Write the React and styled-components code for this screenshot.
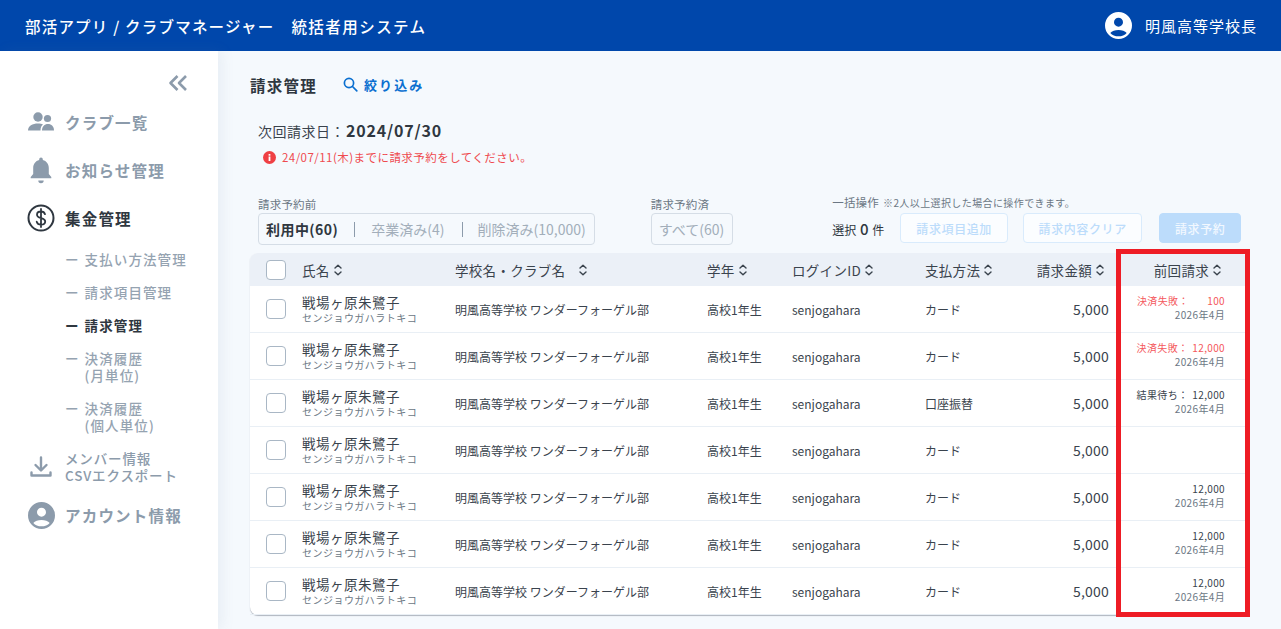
import styled, { createGlobalStyle } from 'styled-components'

const GlobalStyle = createGlobalStyle`
  html, body { margin: 0; padding: 0; height: 100%; }
  body {
    font-family: "Noto Sans CJK JP", "Noto Sans", sans-serif;
    background: #f5f9fd;
    color: #2f3740;
    overflow: hidden;
    text-spacing-trim: space-all;
  }
  * { box-sizing: border-box; }
`

const Page = styled.div`
  width: 1281px;
  height: 629px;
  display: flex;
  flex-direction: column;
  overflow: hidden;
`

const Header = styled.header`
  height: 51px;
  flex: none;
  background: #0047ab;
  color: #fff;
  display: flex;
  align-items: center;
  justify-content: space-between;
  padding: 0 24px 0 25px;
`

const AppTitle = styled.div`
  font-size: 15.5px;
  font-weight: 500;
  letter-spacing: 1.2px;
  white-space: pre;
`

const SystemName = styled.span`
  margin-left: 3px;
  letter-spacing: 1.45px;
`

const HeaderUser = styled.div`
  display: flex;
  align-items: center;
  gap: 13px;
  font-size: 15px;
  letter-spacing: 1px;
`

const Body = styled.div`
  flex: 1;
  display: flex;
  min-height: 0;
`

const Sidebar = styled.nav`
  width: 218px;
  flex: none;
  background: #fff;
  box-shadow: 4px 0 12px rgba(120, 140, 165, 0.1);
  padding: 22px 0 0 27px;
  display: flex;
  flex-direction: column;
`

const Collapse = styled.div`
  display: flex;
  justify-content: flex-end;
  padding-right: 30px;
  height: 20px;
  color: #8c9bab;
`

const NavItem = styled.div`
  display: flex;
  align-items: center;
  gap: 10px;
  height: 28px;
  margin-top: ${p => p.$top || 0}px;
  font-size: ${p => (p.$small ? 13.5 : 15.5)}px;
  font-weight: ${p => (p.$small ? 500 : 700)};
  letter-spacing: ${p => (p.$small ? 0.85 : 1.2)}px;
  line-height: 17px;
  color: ${p => (p.$active ? '#2f3740' : '#8c9bab')};
`

const NavIcon = styled.span`
  width: 28px;
  height: 28px;
  flex: none;
  display: flex;
  align-items: center;
  justify-content: center;
`

const SubNav = styled.div`
  display: flex;
  flex-direction: column;
  margin-top: 19px;
  padding-left: 38px;
`

const SubItem = styled.div`
  display: flex;
  gap: 5px;
  margin-bottom: ${p => p.$gap}px;
  font-size: 13.5px;
  letter-spacing: 1.1px;
  line-height: 17px;
  color: ${p => (p.$active ? '#2f3740' : '#95a3b1')};
  font-weight: ${p => (p.$active ? 700 : 500)};
`

const SubLabel = styled.span`
  white-space: pre;
`

const Main = styled.main`
  flex: 1;
  min-width: 0;
  padding: 23px 34px 0 32px;
`

const TitleRow = styled.div`
  display: flex;
  align-items: center;
  gap: 26px;
  height: 21px;
`

const PageTitle = styled.h1`
  margin: 0;
  font-size: 15.5px;
  font-weight: 700;
  letter-spacing: 1.25px;
  color: #2f3740;
`

const FilterLink = styled.div`
  display: flex;
  align-items: center;
  gap: 6px;
  font-size: 13px;
  font-weight: 700;
  letter-spacing: 2.1px;
  color: #0a6fd0;
`

const BillingDate = styled.div`
  display: flex;
  align-items: baseline;
  margin: 23px 0 0 8px;
  height: 24px;
  font-size: 14px;
  letter-spacing: 0.5px;
  color: #3a434d;
`

const DateValue = styled.strong`
  font-size: 16px;
  font-weight: 700;
  letter-spacing: 0.8px;
  margin-left: 1px;
  color: #2f3740;
`

const Notice = styled.div`
  display: flex;
  align-items: center;
  gap: 6px;
  margin: 6px 0 0 13px;
  height: 18px;
  font-size: 11.5px;
  letter-spacing: 0.45px;
  color: #ef4a4f;
`

const Controls = styled.div`
  display: flex;
  align-items: flex-start;
  margin: 25px 0 0 8px;
  height: 62px;
`

const Group = styled.div`
  display: flex;
  flex-direction: column;
  margin-right: ${p => p.$right}px;
`

const GroupLabel = styled.div`
  font-size: 11.5px;
  line-height: 16px;
  letter-spacing: 0.2px;
  color: #6b7784;
  margin-top: 5px;
`

const TabBox = styled.div`
  display: flex;
  align-items: center;
  height: 32px;
  margin-top: 1px;
  padding: 0 8px 0 7px;
  border: 1px solid #d5dde6;
  border-radius: 4px;
  font-size: 14px;
  color: #a2aeba;
`

const Tab = styled.span`
  font-weight: ${p => (p.$active ? 700 : 400)};
  letter-spacing: ${p => (p.$active ? 0.45 : 0)}px;
  color: ${p => (p.$active ? '#2f3740' : '#a2aeba')};
  white-space: nowrap;
`

const TabDivider = styled.span`
  width: 1px;
  height: 15px;
  background: #8c9bab;
  margin: 0 ${p => p.$right}px 0 ${p => p.$left}px;
`

const Bulk = styled.div`
  display: flex;
  flex-direction: column;
`

const BulkLabel = styled.div`
  font-size: 11.5px;
  line-height: 16px;
  letter-spacing: 0.2px;
  color: #6b7784;
  margin-top: 3px;
`

const BulkNote = styled.span`
  font-size: 10px;
  letter-spacing: 0.4px;
  margin-left: 4px;
`

const BulkRow = styled.div`
  display: flex;
  align-items: center;
  margin-top: 2px;
  height: 30px;
`

const SelectedCount = styled.span`
  font-size: 12px;
  color: #2f3740;
  margin-right: 16px;
  white-space: nowrap;
`

const CountNumber = styled.b`
  font-size: 15px;
  font-weight: 500;
  margin: 0 1px;
`

const BulkButton = styled.div`
  height: 30px;
  width: ${p => p.$width}px;
  margin-right: ${p => p.$right || 0}px;
  display: flex;
  align-items: center;
  justify-content: center;
  border-radius: 4px;
  font-size: 12px;
  font-weight: 500;
  letter-spacing: 0.6px;
  border: 1px solid ${p => (p.$solid ? '#bcdcfb' : '#d9ebfc')};
  background: ${p => (p.$solid ? '#bcdcfb' : '#fbfdff')};
  color: ${p => (p.$solid ? '#f2f8ff' : '#bcdcfb')};
`

const Table = styled.div`
  position: relative;
  width: 997px;
  border-radius: 8px;
  background: #fff;
  box-shadow: 0 1px 1px rgba(90, 100, 115, 0.45);
`

const Row = styled.div`
  display: grid;
  grid-template-columns: 36px 153px 252px 85px 133px 100px 84px 138px;
  align-items: center;
  padding-left: 16px;
  height: 47px;
  border-bottom: 1px solid #e9eff5;
  &:last-child { border-bottom: 0; }
`

const HeadRow = styled(Row)`
  height: 33px;
  background: #ebf0f7;
  border-bottom: 0;
  border-radius: 8px 8px 0 0;
  font-size: 13.5px;
  letter-spacing: 0.3px;
  color: #3a434d;
`

const HeadCell = styled.div`
  display: flex;
  align-items: center;
  justify-content: ${p => (p.$end ? 'flex-end' : 'flex-start')};
  gap: ${p => p.$gap || 4}px;
  padding-right: ${p => p.$pad || 0}px;
  white-space: nowrap;
`

const Check = styled.span`
  width: 20px;
  height: 20px;
  border: 1px solid #a9b7c5;
  border-radius: 4px;
  background: #fff;
  display: block;
`

const NameCell = styled.div`
  display: flex;
  flex-direction: column;
  padding-bottom: 1px;
`

const Name = styled.span`
  font-size: 13.5px;
  line-height: 18px;
  letter-spacing: 0.5px;
  margin-bottom: 1px;
  color: #3a434d;
`

const Kana = styled.span`
  font-size: 10px;
  line-height: 12px;
  letter-spacing: 0.47px;
  color: #6b7784;
`

const Cell = styled.div`
  font-size: 12px;
  color: #3a434d;
  white-space: nowrap;
`

const Amount = styled.div`
  font-size: 14px;
  letter-spacing: 0.2px;
  color: #3a434d;
  text-align: right;
`

const LastBill = styled.div`
  display: flex;
  flex-direction: column;
  align-items: flex-end;
  padding: 0 22px 2px 0;
  font-size: 10px;
  line-height: 14px;
  letter-spacing: 0.35px;
`

const BillStatus = styled.div`
  display: flex;
  justify-content: space-between;
  gap: 4px;
  width: ${p => (p.$wide ? '88px' : 'auto')};
  color: ${p => (p.$failed ? '#f4585c' : '#3a434d')};
  white-space: nowrap;
`

const BillMonth = styled.div`
  color: #6b7784;
`

const Highlight = styled.div`
  position: absolute;
  top: -4px;
  bottom: -2px;
  right: -3px;
  width: 134px;
  border: 5px solid #ee1c25;
  pointer-events: none;
`

const Sort = () => (
  <svg width="8" height="12" viewBox="0 0 8 12" fill="none" stroke="#3a434d" strokeWidth="1.4" strokeLinecap="round" strokeLinejoin="round">
    <path d="M1 4 4 1.2 7 4" />
    <path d="M1 8 4 10.8 7 8" />
  </svg>
)

const rows = [
  { pay: 'カード', status: '決済失敗：', value: '100', failed: true, wide: true },
  { pay: 'カード', status: '決済失敗：', value: '12,000', failed: true },
  { pay: '口座振替', status: '結果待ち：', value: '12,000' },
  { pay: 'カード', empty: true },
  { pay: 'カード', value: '12,000' },
  { pay: 'カード', value: '12,000' },
  { pay: 'カード', value: '12,000' },
]

export default function App() {
  return (
    <Page>
      <GlobalStyle />
      <Header>
        <AppTitle>{'部活アプリ / クラブマネージャー   '}<SystemName>統括者用システム</SystemName></AppTitle>
        <HeaderUser>
          <svg width="27" height="27" viewBox="0 0 24 24" fill="#fff">
            <path fillRule="evenodd" d="M12 0a12 12 0 1 0 0 24 12 12 0 0 0 0-24Zm0 5a4 4 0 1 1 0 8 4 4 0 0 1 0-8Zm0 16.6c-3 0-5.6-1.1-7.3-3 1.4-1.7 4.3-2.7 7.3-2.7s5.9 1 7.3 2.7c-1.7 1.9-4.3 3-7.3 3Z" />
          </svg>
          明風高等学校長
        </HeaderUser>
      </Header>
      <Body>
        <Sidebar>
          <Collapse>
            <svg width="20" height="20" viewBox="0 0 20 20" fill="none" stroke="currentColor" strokeWidth="2.6" strokeLinejoin="round">
              <path d="M9.5 3 2.5 10l7 7" />
              <path d="M18 3l-7 7 7 7" />
            </svg>
          </Collapse>
          <NavItem $top={15}>
            <NavIcon>
              <svg width="28" height="22" viewBox="0 0 28 22" fill="#8c9bab">
                <circle cx="11" cy="6" r="4.7" />
                <circle cx="20.5" cy="7.5" r="3.6" />
                <path d="M1 19.5c0-4.5 4.5-7 10-7 2 0 3.6.3 5 1-1.5 1.2-2.5 3-2.5 6H1Z" />
                <path d="M15 19.5c0-4 2.5-6.5 6-6.5s6 2.5 6 6.5H15Z" />
              </svg>
            </NavIcon>
            クラブ一覧
          </NavItem>
          <NavItem $top={20}>
            <NavIcon>
              <svg width="22" height="27" viewBox="0 0 22 27" fill="#8c9bab">
                <path d="M11 .5a1.8 1.8 0 0 1 1.8 1.8v.8c3.7.9 6 4.1 6 8v6l2.500 3v1.100H.7v-1.100l2.500-3v-6c0-3.900 2.300-7.100 6-8v-.8A1.800 1.800 0 0 1 11 .5Z" />
                <path d="M8.3 23.5h5.4a2.700 2.700 0 0 1-5.400 0Z" />
              </svg>
            </NavIcon>
            お知らせ管理
          </NavItem>
          <NavItem $top={20} $active>
            <NavIcon>
              <svg width="28" height="28" viewBox="0 0 28 28" fill="none" stroke="#2f3740">
                <circle cx="14" cy="14" r="12.5" strokeWidth="2" />
                <path d="M18 10.2c-.5-1.7-2-2.7-4-2.7-2.4 0-4 1.3-4 3.2 0 4.5 8.2 2.3 8.2 6.7 0 1.9-1.8 3.2-4.2 3.2-2.2 0-3.8-1.100-4.300-2.900M14 5v18" strokeWidth="1.8" strokeLinecap="round" />
              </svg>
            </NavIcon>
            集金管理
          </NavItem>
          <SubNav>
            <SubItem $gap={16}><span>ー</span><SubLabel>支払い方法管理</SubLabel></SubItem>
            <SubItem $gap={16}><span>ー</span><SubLabel>請求項目管理</SubLabel></SubItem>
            <SubItem $gap={16} $active><span>ー</span><SubLabel>請求管理</SubLabel></SubItem>
            <SubItem $gap={16}><span>ー</span><SubLabel>{'決済履歴\n(月単位)'}</SubLabel></SubItem>
            <SubItem $gap={19}><span>ー</span><SubLabel>{'決済履歴\n(個人単位)'}</SubLabel></SubItem>
          </SubNav>
          <NavItem $small>
            <NavIcon>
              <svg width="24" height="24" viewBox="0 0 24 24" fill="none" stroke="#8c9bab" strokeWidth="2.4" strokeLinecap="round" strokeLinejoin="round">
                <path d="M12 2.5V15M6.5 10l5.5 5.5 5.5-5.5" />
                <path d="M2.5 17.5v3h19v-3" />
              </svg>
            </NavIcon>
            <span>メンバー情報<br />CSVエクスポート</span>
          </NavItem>
          <NavItem $top={20}>
            <NavIcon>
              <svg width="27" height="27" viewBox="0 0 24 24" fill="#8c9bab">
                <path fillRule="evenodd" d="M12 0a12 12 0 1 0 0 24 12 12 0 0 0 0-24Zm0 5a4 4 0 1 1 0 8 4 4 0 0 1 0-8Zm0 16.6c-3 0-5.6-1.1-7.3-3 1.4-1.7 4.3-2.7 7.3-2.7s5.9 1 7.3 2.7c-1.7 1.9-4.3 3-7.3 3Z" />
              </svg>
            </NavIcon>
            アカウント情報
          </NavItem>
        </Sidebar>
        <Main>
          <TitleRow>
            <PageTitle>請求管理</PageTitle>
            <FilterLink>
              <svg width="15" height="15" viewBox="0 0 15 15" fill="none" stroke="#0a6fd0" strokeWidth="1.7" strokeLinecap="round">
                <circle cx="6" cy="6" r="4.6" />
                <path d="M9.5 9.5 13.8 13.8" />
              </svg>
              絞り込み
            </FilterLink>
          </TitleRow>
          <BillingDate>次回請求日：<DateValue>2024/07/30</DateValue></BillingDate>
          <Notice>
            <svg width="13" height="13" viewBox="0 0 13 13">
              <circle cx="6.5" cy="6.5" r="6.5" fill="#ef4044" />
              <rect x="5.6" y="5.5" width="1.8" height="4.5" fill="#fff" />
              <rect x="5.6" y="3" width="1.8" height="1.7" fill="#fff" />
            </svg>
            24/07/11(木)までに請求予約をしてください。
          </Notice>
          <Controls>
            <Group $right={56}>
              <GroupLabel>請求予約前</GroupLabel>
              <TabBox>
                <Tab $active>利用中(60)</Tab>
                <TabDivider $left={16} $right={16} />
                <Tab>卒業済み(4)</Tab>
                <TabDivider $left={17} $right={15} />
                <Tab>削除済み(10,000)</Tab>
              </TabBox>
            </Group>
            <Group $right={99}>
              <GroupLabel>請求予約済</GroupLabel>
              <TabBox>
                <Tab>すべて(60)</Tab>
              </TabBox>
            </Group>
            <Bulk>
              <BulkLabel>一括操作<BulkNote>※2人以上選択した場合に操作できます。</BulkNote></BulkLabel>
              <BulkRow>
                <SelectedCount>選択 <CountNumber>0</CountNumber> 件</SelectedCount>
                <BulkButton $width={108} $right={15}>請求項目追加</BulkButton>
                <BulkButton $width={119} $right={17}>請求内容クリア</BulkButton>
                <BulkButton $width={82} $solid>請求予約</BulkButton>
              </BulkRow>
            </Bulk>
          </Controls>
          <Table>
            <HeadRow>
              <Check />
              <HeadCell>氏名<Sort /></HeadCell>
              <HeadCell $gap={14}>学校名・クラブ名<Sort /></HeadCell>
              <HeadCell>学年<Sort /></HeadCell>
              <HeadCell>ログインID<Sort /></HeadCell>
              <HeadCell>支払方法<Sort /></HeadCell>
              <HeadCell $end $pad={5}>請求金額<Sort /></HeadCell>
              <HeadCell $end $pad={26}>前回請求<Sort /></HeadCell>
            </HeadRow>
            {rows.map((row, i) => (
              <Row key={i}>
                <Check />
                <NameCell>
                  <Name>戦場ヶ原朱鷺子</Name>
                  <Kana>センジョウガハラトキコ</Kana>
                </NameCell>
                <Cell>明風高等学校 ワンダーフォーゲル部</Cell>
                <Cell>高校1年生</Cell>
                <Cell>senjogahara</Cell>
                <Cell>{row.pay}</Cell>
                <Amount>5,000</Amount>
                {row.empty ? <div /> : (
                  <LastBill>
                    <BillStatus $failed={row.failed} $wide={row.wide}>
                      <span>{row.status}</span>
                      <span>{row.value}</span>
                    </BillStatus>
                    <BillMonth>2026年4月</BillMonth>
                  </LastBill>
                )}
              </Row>
            ))}
            <Highlight />
          </Table>
        </Main>
      </Body>
    </Page>
  )
}
